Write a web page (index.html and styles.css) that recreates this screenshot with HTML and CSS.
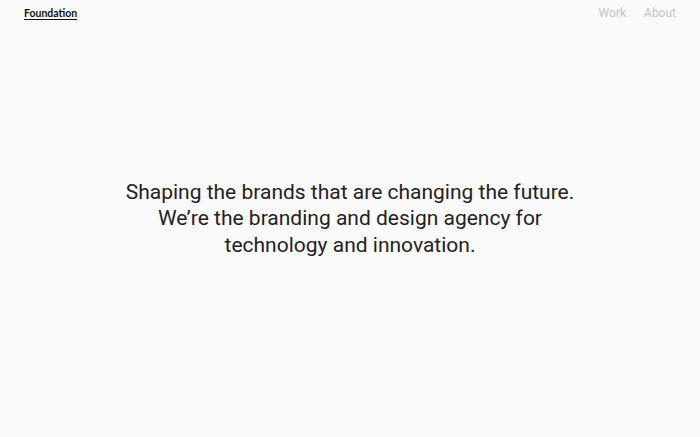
FILE: index.html
```html
<!DOCTYPE html>
<html lang="en">

<head>
    <meta charset="UTF-8">
    <meta name="viewport" content="width=device-width, initial-scale=1.0">
    <title>Foundation</title>
    <link rel="stylesheet" href="styles.css">
</head>

<body>
    <header class="site-header">
        <a class="logo" href="#">Foundation</a>
        <nav class="nav">
            <a href="#">Work</a>
            <a href="#">About</a>
        </nav>
    </header>

    <main class="hero">
        <p>Shaping the brands that are changing the future.<br>
            We’re the branding and design agency for<br>
            technology and innovation.</p>
    </main>
</body>

</html>
```

FILE: styles.css
```css
* {
    box-sizing: border-box;
    margin: 0;
    padding: 0;
}

html,
body {
    height: 100%;
}

body {
    font-family: Roboto, 'Liberation Sans', sans-serif;
    background-color: #fafafa;
    color: #222;
    position: relative;
}

.site-header {
    position: absolute;
    top: 0;
    left: 0;
    right: 0;
    display: flex;
    justify-content: space-between;
    align-items: center;
    padding: 0 24px;
    height: 25px;
}

.logo {
    font-family: Lato, sans-serif;
    font-size: 10.5px;
    font-weight: 700;
    color: #111;
    text-decoration: underline;
    text-underline-offset: 2px;
}

.nav {
    display: flex;
    gap: 18px;
}

.nav a {
    color: #c4c4c4;
    text-decoration: none;
    font-size: 12px;
}

.hero {
    height: 100%;
    display: flex;
    align-items: center;
    justify-content: center;
    text-align: center;
}

.hero p {
    font-size: 21px;
    line-height: 26.5px;
}
```
